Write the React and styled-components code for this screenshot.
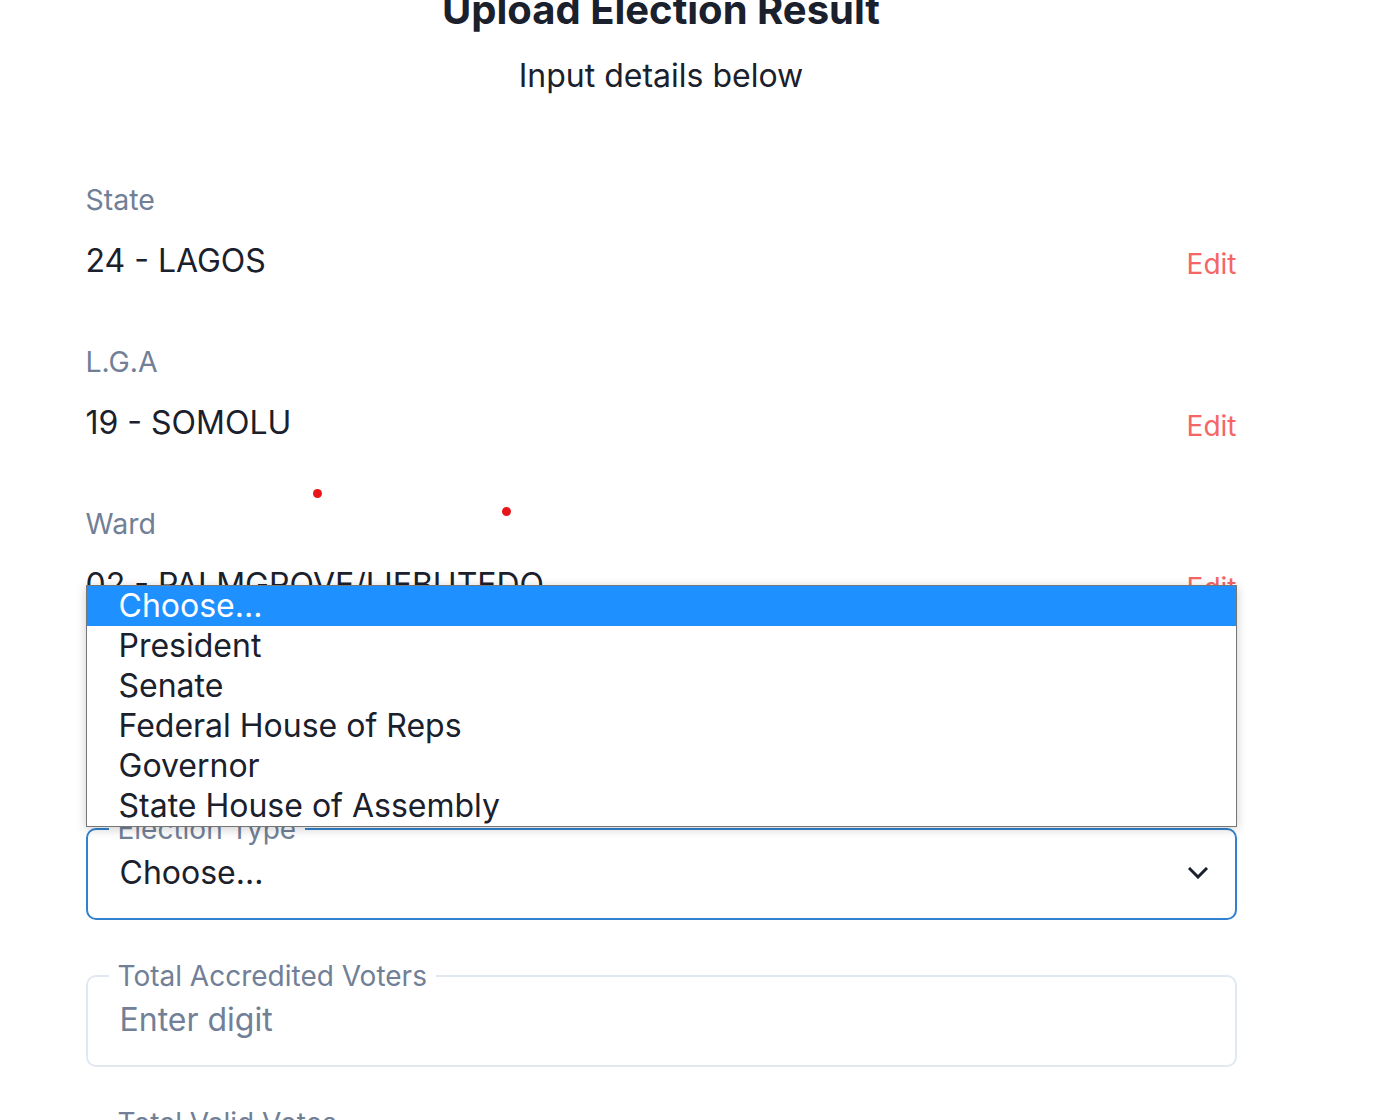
import React from "react";
import styled, { createGlobalStyle } from "styled-components";

const GlobalStyle = createGlobalStyle`
  html, body {
    margin: 0;
    padding: 0;
    background: #ffffff;
    overflow: hidden;
    font-family: Inter, "Noto Sans", "Liberation Sans", sans-serif;
    color: #1a202c;
  }
  * {
    box-sizing: border-box;
  }
`;

const locations = [
  { label: "State", value: "24 - LAGOS" },
  { label: "L.G.A", value: "19 - SOMOLU" },
  { label: "Ward", value: "02 - PALMGROVE/IJEBUTEDO" },
];

const electionTypes = [
  "Choose...",
  "President",
  "Senate",
  "Federal House of Reps",
  "Governor",
  "State House of Assembly",
];

const App = () => {
  return (
    <>
      <GlobalStyle />
      <Page>
        <Header>
          <Title>Upload Election Result</Title>
          <Subtitle>Input details below</Subtitle>
        </Header>

        {locations.map((item) => (
          <InfoBlock key={item.label}>
            <InfoLabel>{item.label}</InfoLabel>
            <ValueRow>
              <Value>{item.value}</Value>
              <EditLink href="#">Edit</EditLink>
            </ValueRow>
          </InfoBlock>
        ))}

        <SelectWrap>
          <Field $active>
            <Legend>Election Type</Legend>
            <Control>
              <span>Choose...</span>
              <svg width="20" height="12" viewBox="0 0 20 12" fill="none">
                <path
                  d="M2 2l8 8 8-8"
                  stroke="#1a202c"
                  strokeWidth="3"
                  strokeLinecap="square"
                />
              </svg>
            </Control>
          </Field>

          <OptionList>
            {electionTypes.map((opt, i) => (
              <OptionItem key={opt} $selected={i === 0}>
                {opt}
              </OptionItem>
            ))}
          </OptionList>
        </SelectWrap>

        <Field>
          <Legend>Total Accredited Voters</Legend>
          <Control $placeholder>Enter digit</Control>
        </Field>

        <Field>
          <Legend>Total Valid Votes</Legend>
          <Control $placeholder>Enter digit</Control>
        </Field>

        <Dot style={{ left: 227, top: 489 }} />
        <Dot style={{ left: 416, top: 507 }} />
      </Page>
    </>
  );
};

export default App;

const Page = styled.div`
  position: relative;
  display: flow-root;
  width: 1151px;
  margin-left: 85.5px;
`;

const Header = styled.header`
  text-align: center;
  margin-top: -14px;
  margin-bottom: 80px;
`;

const Title = styled.h1`
  margin: 0;
  font-size: 40px;
  line-height: 48px;
  font-weight: 700;
  color: #1a202c;
`;

const Subtitle = styled.p`
  margin: 18px 0 0;
  font-size: 32px;
  line-height: 47px;
  color: #1a202c;
`;

const InfoBlock = styled.div`
  margin-bottom: 57px;
`;

const InfoLabel = styled.div`
  font-size: 28.5px;
  line-height: 42px;
  color: #718096;
  margin-bottom: 16px;
`;

const ValueRow = styled.div`
  display: flex;
  justify-content: space-between;
  align-items: baseline;
`;

const Value = styled.div`
  font-size: 32px;
  line-height: 47px;
  color: #1a202c;
`;

const EditLink = styled.a`
  font-size: 28px;
  color: #f56565;
  text-decoration: none;
  position: relative;
  top: 2px;
`;

const SelectWrap = styled.div`
  position: relative;
  margin-top: 204px;
`;

const Field = styled.fieldset`
  margin: 0 0 39px;
  min-width: 0;
  padding: 3px 21px 21px;
  border: 2px solid ${(p) => (p.$active ? "#3182ce" : "#e2e8f0")};
  border-radius: 10px;
`;

const Legend = styled.legend`
  padding: 0 9px;
  font-size: 28px;
  line-height: 34px;
  color: #718096;
`;

const Control = styled.div`
  display: flex;
  align-items: center;
  justify-content: space-between;
  padding: 0 6px 0 11px;
  font-size: 32px;
  line-height: 48px;
  color: ${(p) => (p.$placeholder ? "#718096" : "#1a202c")};
`;

const OptionList = styled.ul`
  position: absolute;
  top: -227px;
  left: 0;
  right: 0;
  z-index: 5;
  margin: 0;
  padding: 0;
  list-style: none;
  background: #ffffff;
  border: 1px solid #767676;
  box-shadow: 0 2px 10px rgba(0, 0, 0, 0.2);
`;

const OptionItem = styled.li`
  height: 40px;
  padding-left: 32px;
  font-size: 32px;
  line-height: 40px;
  background: ${(p) => (p.$selected ? "#1e90ff" : "transparent")};
  color: ${(p) => (p.$selected ? "#ffffff" : "#1a202c")};
`;

const Dot = styled.span`
  position: absolute;
  width: 9px;
  height: 9px;
  border-radius: 50%;
  background: #e8161b;
`;
